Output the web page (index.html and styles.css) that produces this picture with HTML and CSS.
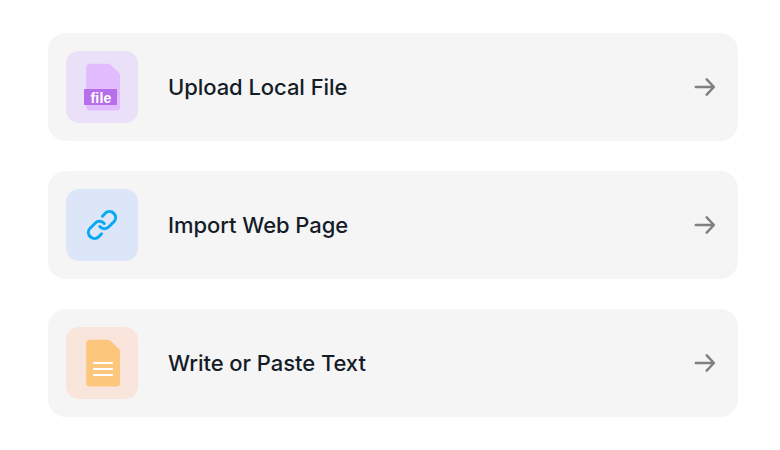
FILE: index.html
```
<!DOCTYPE html>
<html lang="en">
<head>
<meta charset="utf-8">
<title>Add source</title>
<link rel="stylesheet" href="styles.css">
</head>
<body>
<main class="options">
  <a class="option">
    <span class="tile tile-file">
      <svg viewBox="0 0 72 72">
        <path fill="#e1bcff" d="M24 12.700h17.800q1.500 0 2.600 1L53 21.800q1 1 1 2.500V56a3.500 3.500 0 0 1-3.500 3.500H23.700A3.500 3.500 0 0 1 20.200 56V16.500a3.800 3.800 0 0 1 3.800-3.800z"/>
        <rect x="18" y="38" width="33" height="16" fill="#b66eea"/>
        <text class="file-label" x="34.900" y="51.500" text-anchor="middle" textLength="21">file</text>
      </svg>
    </span>
    <span class="label">Upload Local File</span>
    <svg class="arrow" viewBox="0 0 22 20"><path d="M1.800 10H19.600M12.700 2.300l7.200 7.700-7.200 7.700"/></svg>
  </a>
  <a class="option">
    <span class="tile tile-link">
      <svg viewBox="0 0 72 72">
        <g class="chain">
          <path id="loop" d="M36.400 27.200l3.100-3.200a6.100 6.100 0 0 1 8.600 8.600l-5.200 5.200a6.200 6.200 0 0 1-9.100-.3"/>
          <use href="#loop" transform="rotate(180 36 36)"/>
        </g>
      </svg>
    </span>
    <span class="label">Import Web Page</span>
    <svg class="arrow" viewBox="0 0 22 20"><path d="M1.800 10H19.600M12.700 2.300l7.200 7.700-7.200 7.700"/></svg>
  </a>
  <a class="option">
    <span class="tile tile-text">
      <svg viewBox="0 0 72 72">
        <path fill="#fcc77d" d="M24 12.700h17.800q1.500 0 2.600 1L53 21.800q1 1 1 2.500V56a3.500 3.500 0 0 1-3.500 3.500H23.700A3.500 3.500 0 0 1 20.200 56V16.500a3.800 3.800 0 0 1 3.800-3.800z"/>
        <path class="lines" d="M28 36h18M28 42h18M28 48h18"/>
      </svg>
    </span>
    <span class="label">Write or Paste Text</span>
    <svg class="arrow" viewBox="0 0 22 20"><path d="M1.800 10H19.600M12.700 2.300l7.200 7.700-7.200 7.700"/></svg>
  </a>
</main>
</body>
</html>
```
FILE: styles.css
```
body {
  margin: 0;
  background: #fff;
  font-family: Inter, "Liberation Sans", sans-serif;
}
.options {
  display: flex;
  flex-direction: column;
  gap: 30px;
  padding: 33px 42px 0 48px;
}
.option {
  display: flex;
  align-items: center;
  box-sizing: border-box;
  height: 108px;
  padding: 0 22px 0 18px;
  border-radius: 18px;
  background: #f5f5f5;
}
.tile {
  width: 72px;
  height: 72px;
  border-radius: 13px;
}
.tile svg {
  display: block;
  width: 72px;
  height: 72px;
}
.tile-file { background: #eae0f8; }
.tile-link { background: #dde6f8; }
.tile-text { background: #f9e5dc; }
.file-label {
  fill: #fff;
  font: 700 14px "Liberation Sans", sans-serif;
}
.chain {
  fill: none;
  stroke: #08a9f4;
  stroke-width: 3;
  stroke-linecap: round;
}
.lines {
  stroke: #fff;
  stroke-width: 2.2;
  stroke-linecap: round;
}
.label {
  flex: 1;
  margin-left: 30px;
  color: #141c28;
  font-size: 22px;
  font-weight: 500;
  line-height: 30px;
  letter-spacing: -0.06px;
}
.arrow {
  width: 22px;
  height: 20px;
  fill: none;
  stroke: #808080;
  stroke-width: 2.5;
  stroke-linecap: round;
  stroke-linejoin: round;
}
```
